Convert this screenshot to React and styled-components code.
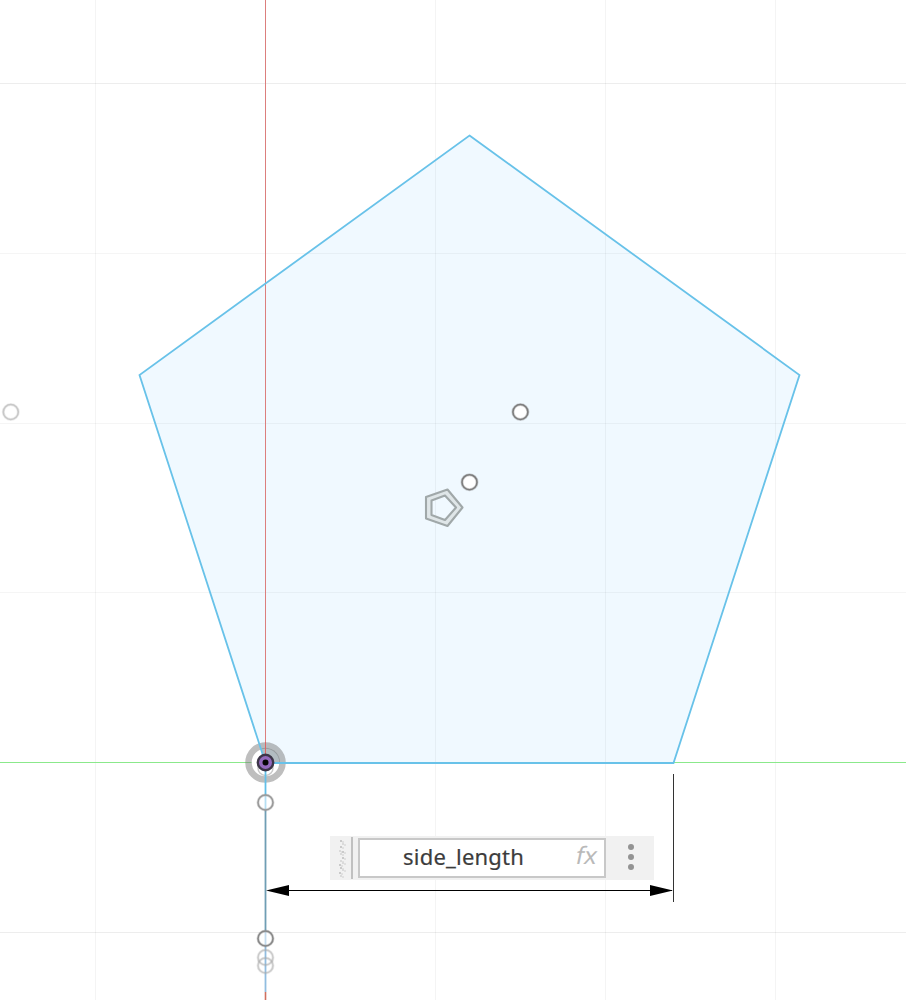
import React from 'react';
import styled, { createGlobalStyle } from 'styled-components';

const GlobalStyle = createGlobalStyle`
  body { margin: 0; background: #fff; }
  * { box-sizing: border-box; }
`;

const Canvas = styled.main`
  position: relative;
  width: 906px;
  height: 1000px;
  overflow: hidden;
  background: #fff;
`;

const Drawing = styled.svg`
  display: block;
`;

const DimensionInput = styled.div`
  position: absolute;
  left: 330px;
  top: 836px;
  width: 324px;
  height: 44px;
  display: flex;
  align-items: center;
  background: #f1f1f1;
`;

const Grip = styled.div`
  flex: none;
  width: 23px;
  height: 42px;
  padding-left: 8px;
  border-right: 2px solid #c0c0c0;
  display: flex;
  align-items: center;
`;

const Field = styled.div`
  flex: none;
  width: 248px;
  height: 40px;
  margin-left: 5px;
  border: 2px solid #c8c8c8;
  background: #fff;
  display: flex;
  align-items: center;
  justify-content: space-between;
  padding: 0 7px 4px 43px;
  font-family: 'Noto Sans', 'Open Sans', sans-serif;
`;

const Value = styled.span`
  font-size: 22px;
  line-height: 30px;
  letter-spacing: 0.22px;
  color: #3c3c3c;
  -webkit-text-stroke: 0.2px #3c3c3c;
  white-space: nowrap;
`;

const Fx = styled.span`
  font-size: 24px;
  line-height: 28px;
  transform: skewX(-12deg);
  color: #b9b9b9;
  padding-bottom: 3px;
`;

const Menu = styled.div`
  flex: none;
  width: 50px;
  padding-bottom: 2px;
  display: flex;
  flex-direction: column;
  align-items: center;
  gap: 4px;
`;

const Dot = styled.i`
  width: 6px;
  height: 6px;
  border-radius: 3px;
  background: #939393;
`;

const columns = [95.5, 435.5, 605.5, 775.5];
const rows = [83.5, 253.5, 423.5, 592.5, 932.5];
const gripMarks = [
  [2, 2], [4, 5], [2, 8], [1, 12], [4, 13], [2, 15], [4, 19],
  [2, 22], [1, 26], [4, 24], [2, 29], [4, 31], [1, 34], [2, 37],
];

const Handle = ({ x, y, color = '#7d7d7d', fill = '#fff', opacity = 1 }) => (
  <g opacity={opacity}>
    <circle cx={x} cy={y} r="7.5" fill={fill} stroke={color} strokeOpacity=".35" strokeWidth="3" />
    <circle cx={x} cy={y} r="7.5" fill="none" stroke={color} strokeWidth="1.6" />
  </g>
);

export default function App() {
  return (
    <Canvas>
      <GlobalStyle />
      <Drawing width="906" height="1000" viewBox="0 0 906 1000">
        <path d="M469.5 135.5 799.5 375 673.5 763H265.5L139.5 375Z" fill="#f0f9ff" />
        <g stroke="#000">
          {columns.map((x) => <path key={x} d={`M${x} 0V1000`} strokeOpacity=".045" />)}
          {rows.map((y, i) => <path key={y} d={`M0 ${y}H906`} strokeOpacity={i === 0 || i === 4 ? 0.07 : 0.04} />)}
        </g>
        <path d="M0 762.5H906" stroke="#8be98b" />
        <path d="M265.5 0V763" stroke="#dc7f7d" />
        <path d="M265.5 992V1000" stroke="#d0705f" strokeWidth="1.6" />
        <circle cx="265.5" cy="762.5" r="14" fill="#fff" />
        <path d="M261 748.5A14.5 14.5 0 0 1 280 762.5H265.5Z" fill="#b2bcc1" />
        <circle cx="265.5" cy="762.5" r="17" fill="none" stroke="#777" strokeOpacity=".48" strokeWidth="6.5" />
        <circle cx="265.5" cy="768" r="7.5" fill="none" stroke="#c8c8c8" strokeWidth="1.5" />
        <path d="M265.5 742V763" stroke="#dc6666" />
        <path d="M469.5 135.5 799.5 375 673.5 763H265.5L139.5 375Z" fill="none" stroke="#68c2e9" strokeWidth="1.8" />
        <path d="M265.5 763V795" stroke="#62bfe8" strokeWidth="1.8" />
        <path d="M265.5 795V810" stroke="#b5dff3" strokeWidth="1.8" />
        <path d="M265.5 810V930" stroke="#6f9eb4" strokeWidth="1.8" />
        <path d="M265.5 930V992" stroke="#91bde0" strokeWidth="1.8" />
        <Handle x={265.5} y={802.5} color="#999" fill="none" />
        <Handle x={265.5} y={938.5} color="#888" fill="#ffffff77" />
        <Handle x={265.5} y={957.5} color="#aaa" fill="none" opacity={0.6} />
        <Handle x={265.5} y={965.5} color="#aaa" fill="none" opacity={0.6} />
        <Handle x={10.8} y={412} color="#c8c8c8" />
        <Handle x={520.4} y={412} />
        <Handle x={469.5} y={482.2} />
        <circle cx="265.5" cy="762.5" r="7.7" fill="#9369bd" stroke="#3c3548" strokeWidth="2.4" />
        <circle cx="265.5" cy="762.5" r="3" fill="#050505" />
        <g fill="none" strokeLinejoin="round">
          <path d="M428.5 499 446.5 492 459.5 507.5 446.5 523.5 428.5 517Z" stroke="#dfe6e8" strokeWidth="5" />
          <g stroke="#a0a8a9" strokeWidth="2.1">
            <path d="M426 497 447.5 489.5 462.5 507.5 447.5 526 426 518.5Z" />
            <path d="M431.5 500.5 445 495.5 456 507.5 445 520 431.5 515Z" />
          </g>
        </g>
        <path d="M673.5 774V902" stroke="#333" />
        <path d="M268 890.5H672" stroke="#000" />
        <path d="M266 890.5 289 885V896ZM673 890.5 650 885V896Z" />
      </Drawing>
      <DimensionInput>
        <Grip>
          <svg width="8" height="40" viewBox="0 0 8 40">
            {gripMarks.map(([x, y], i) => (
              <g key={y}>
                <rect x={x} y={y} width="2" height="2" fill={i % 2 ? '#dadada' : '#cacaca'} />
                <rect x={x + 2} y={y + 1} width="2" height="2" fill="#e0e0e0" />
              </g>
            ))}
          </svg>
        </Grip>
        <Field><Value>side_length</Value><Fx>fx</Fx></Field>
        <Menu><Dot /><Dot /><Dot /></Menu>
      </DimensionInput>
    </Canvas>
  );
}
